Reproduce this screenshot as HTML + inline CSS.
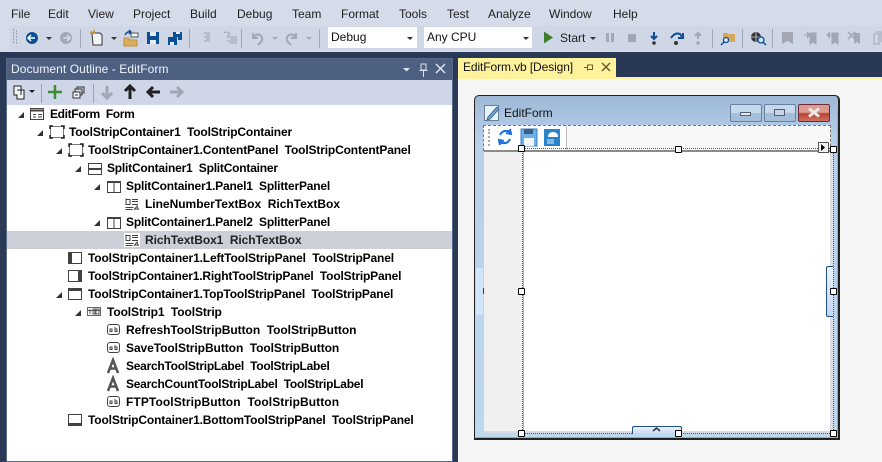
<!DOCTYPE html>
<html><head><meta charset="utf-8"><style>
html,body{margin:0;padding:0}
body{width:882px;height:462px;position:relative;overflow:hidden;background:#293955;font-family:"Liberation Sans",sans-serif;font-size:12px;color:#1e1e1e}
div,span,svg{position:absolute}
.m{top:7px;line-height:14px;white-space:nowrap}
.t{font-weight:bold;color:#000;white-space:nowrap;line-height:18px;height:18px;font-size:12px;letter-spacing:-.15px}
.sep{width:1px;background:#a0a7b8}
.h{width:5px;height:5px;background:#fff;border:1px solid #000;border-radius:1px}
</style></head><body>
<div style="left:0;top:0;width:882px;height:52px;background:#d6dbe9"></div>
<div style="left:10px;top:26px;width:872px;height:24px;background:#cfd6e5"></div>
<div class="m" style="left:11px">File</div><div class="m" style="left:48px">Edit</div><div class="m" style="left:88px">View</div><div class="m" style="left:133px">Project</div><div class="m" style="left:190px">Build</div><div class="m" style="left:237px">Debug</div><div class="m" style="left:292px">Team</div><div class="m" style="left:341px">Format</div><div class="m" style="left:399px">Tools</div><div class="m" style="left:447px">Test</div><div class="m" style="left:488px">Analyze</div><div class="m" style="left:549px">Window</div><div class="m" style="left:613px">Help</div>

<svg style="left:0;top:26px" width="882" height="24" viewBox="0 26 882 24">
<path d="M13 30h1M16 31h1M13 33h1M16 34h1M13 36h1M16 37h1M13 39h1M16 40h1M13 42h1M16 43h1" stroke="#6a7180" fill="none"/>
<circle cx="32" cy="38" r="6" fill="#0b4f96"/><path d="M35 38h-6M31 35l-3 3 3 3" stroke="#fff" stroke-width="1.5" fill="none"/>
<path d="M46 37h6l-3 3z" fill="#333"/>
<circle cx="66" cy="38" r="6" fill="#a2a7b2"/><path d="M63 38h6M67 35l3 3-3 3" stroke="#dde" stroke-width="1.5" fill="none"/>
<path d="M92 33h8l2 2v10h-9z" fill="#f3f4f8" stroke="#333"/><path d="M91 31l1 3M94 30v3M90 33h5" stroke="#c58a2a" stroke-width="1.5"/>
<path d="M111 37h6l-3 3z" fill="#333"/>
<path d="M124 38h4l2 2h7v6h-13z" fill="#dcae62" stroke="#c08f3c"/><path d="M125 35q2-4 6-3M129 30l2 2-2 2" stroke="#0b4f96" stroke-width="1.5" fill="none"/><rect x="131" y="33" width="7" height="4" fill="#f3f4f8" stroke="#555"/>
<path d="M147 32h12v12h-12z" fill="#0b4f96"/><rect x="150" y="32" width="6" height="4" fill="#e8ebf3"/><rect x="150" y="40" width="6" height="4" fill="#e8ebf3"/>
<path d="M168 37h9v8h-9z" fill="#0b4f96"/><path d="M173 32h9v8h-4v-3h-5z" fill="#0b4f96"/><rect x="170" y="42" width="4" height="3" fill="#e8ebf3"/><rect x="176" y="32" width="4" height="2" fill="#e8ebf3"/>
<path d="M204 33h6M206 35h4M204 37h6M206 39h4M204 41h6" stroke="#a2a7b2"/><path d="M227 37h10M230 39h7M227 41h10M230 43h7" stroke="#a2a7b2"/><path d="M224 33q3-2 5 0t-2 3" stroke="#a2a7b2" fill="none"/>
<path d="M253 33v5h5M253 38q3-5 7-3 4 3 1 7l-3 3" stroke="#a2a7b2" stroke-width="2" fill="none"/><path d="M272 37h6l-3 3z" fill="#a2a7b2"/>
<path d="M296 33v5h-5M296 38q-3-5-7-3-4 3-1 7l3 3" stroke="#a2a7b2" stroke-width="2" fill="none"/><path d="M306 37h6l-3 3z" fill="#a2a7b2"/>
<path d="M544 32l9 6-9 6z" fill="#3f7f2e" transform="translate(0,-.5)"/>
<path d="M590 37h6l-3 3z" fill="#333"/>
<rect x="606" y="33" width="3" height="9" fill="#a2a7b2"/><rect x="611" y="33" width="3" height="9" fill="#a2a7b2"/>
<rect x="628" y="34" width="8" height="8" fill="#a2a7b2"/>
<path d="M654 32v6M651 36l3 3 3-3" stroke="#0b4f96" stroke-width="2" fill="none"/><circle cx="654" cy="43" r="1.8" fill="#333"/>
<path d="M671 38q4-6 9-4l2 3M683 33v5h-5" stroke="#0b4f96" stroke-width="2" fill="none"/><circle cx="676" cy="43" r="2" fill="#333"/>
<path d="M698 39v-6M695 36l3-3 3 3" stroke="#a2a7b2" stroke-width="2" fill="none"/><circle cx="698" cy="43" r="1.8" fill="#a2a7b2"/>
<path d="M723 33h4l1 1h7v8h-12z" fill="#d6a65a"/><circle cx="726" cy="40" r="2.5" fill="#e8ebf3" stroke="#0b4f96" stroke-width="1.3"/><path d="M724 42l-3 3" stroke="#0b4f96" stroke-width="1.5"/>
<circle cx="756" cy="37" r="5" fill="#333"/><path d="M751 37h10M756 32v10" stroke="#cfd6e5" stroke-width=".8"/><circle cx="761" cy="40" r="3" fill="#d7dfef" stroke="#0b4f96" stroke-width="1.3"/><path d="M763 42l3 3" stroke="#0b4f96" stroke-width="1.5"/>
<path d="M782 32h11v12l-5.500-3-5.500 3z" fill="#a2a7b2"/>
<path d="M810 33h6v11l-3-2-3 2zM804 35h5M807 32l3 3-3 3" fill="#a2a7b2" stroke="#a2a7b2"/>
<path d="M832 33h6v11l-3-2-3 2zM827 35h5M830 32l-3 3 3 3" fill="#a2a7b2" stroke="#a2a7b2"/>
<path d="M854 33h6v11l-3-2-3 2z" fill="#a2a7b2"/><path d="M848 32l7 7M855 32l-7 7" stroke="#a2a7b2" stroke-width="1.500"/>
<path d="M874 34h5v10h-5z" fill="none" stroke="#a2a7b2"/><path d="M876 32h5v10" fill="none" stroke="#a2a7b2"/>
</svg>
<div class="sep" style="left:80px;top:29px;height:19px"></div><div class="sep" style="left:189px;top:29px;height:19px"></div><div class="sep" style="left:241px;top:29px;height:19px"></div><div class="sep" style="left:319px;top:29px;height:19px"></div><div class="sep" style="left:712px;top:29px;height:19px"></div><div class="sep" style="left:742px;top:29px;height:19px"></div><div class="sep" style="left:772px;top:29px;height:19px"></div>
<div style="left:328px;top:27px;width:89px;height:21px;background:#fff"></div>
<div style="left:331px;top:30px;line-height:15px;color:#111">Debug</div>
<div style="left:424px;top:27px;width:108px;height:21px;background:#fff"></div>
<div style="left:427px;top:30px;line-height:15px;color:#111;white-space:nowrap">Any CPU</div>
<svg style="left:405px;top:36px" width="130" height="6"><path d="M2 1h6l-3 3z" fill="#333"/><path d="M118 1h6l-3 3z" fill="#333"/></svg>
<div class="m" style="left:560px;top:31px;color:#1e1e1e">Start</div>

<div style="left:6px;top:58px;width:447px;height:404px;background:#fff;outline:1px solid #59698a;outline-offset:-1px"></div>
<div style="left:7px;top:59px;width:445px;height:21px;background:#4d6082"></div>
<div style="left:11px;top:62px;color:#f2f4f9;line-height:15px;white-space:nowrap;letter-spacing:.08px">Document Outline - EditForm</div>
<svg style="left:400px;top:60px" width="50" height="20"><path d="M3 8h7l-3.500 3.500z" fill="#dfe4ee"/><path d="M21 4h5v6h-5zM19.500 10.500h8M23.500 11v6" stroke="#dfe4ee" fill="none"/><path d="M36 4l9 9M45 4l-9 9" stroke="#dfe4ee" stroke-width="1.500"/></svg>
<div style="left:7px;top:80px;width:445px;height:25px;background:#cfd6e7"></div>
<svg style="left:7px;top:80px" width="190" height="25" viewBox="7 80 190 25">
<path d="M14 86h7v4h3v9h-7v-4h-3z" fill="#f4f5f9" stroke="#222"/><path d="M17 90h4v5" fill="none" stroke="#222"/><path d="M29 90h6l-3 3z" fill="#222"/>
<rect x="41" y="84" width="1" height="19" fill="#9aa2b4"/>
<path d="M55 85v14M48 92h14" stroke="#3f8a34" stroke-width="2.500"/>
<rect x="73" y="92" width="7" height="6" fill="#f4f5f9" stroke="#333"/><path d="M75 92v-3h7v6h-2M77 89v-2h7v6h-2" fill="none" stroke="#333"/><path d="M75 95h3" stroke="#333"/>
<rect x="93" y="84" width="1" height="19" fill="#9aa2b4"/>
<path d="M107 86v12M102 93l5 5 5-5" stroke="#a0a6b4" stroke-width="3" fill="none"/>
<path d="M130 99v-13M125 91l5-5 5 5" stroke="#222" stroke-width="3" fill="none"/>
<path d="M160 92h-12M153 87l-5 5 5 5" stroke="#222" stroke-width="3" fill="none"/>
<path d="M170 92h12M177 87l5 5-5 5" stroke="#a0a6b4" stroke-width="3" fill="none"/>
</svg>

<div style="left:7px;top:231px;width:445px;height:18px;background:#ccced8"></div>

<svg style="left:0;top:105px" width="150" height="330" viewBox="0 105 150 330" fill="none" stroke="#424242">
<g fill="#333" stroke="none"><path d="M24 112v6h-6zM43 130v6h-6zM62 148v6h-6zM81 166v6h-6zM100 184v6h-6zM100 220v6h-6zM62 292v6h-6zM81 310v6h-6z"/></g>
<rect x="30.500" y="108.500" width="13" height="11"/><path d="M31 110.500h12" stroke-width="2"/><path d="M33 114.500h3M33 117h3M38 114.500h4M38 117h4"/>
<rect x="50.500" y="126.500" width="13" height="11" stroke="#777"/><path d="M50 129v-3h3M61 126h3v3M64 135v3h-3M53 138h-3v-3" stroke="#222" stroke-width="1.500"/>
<rect x="69.500" y="144.500" width="13" height="11" stroke="#777"/><path d="M69 147v-3h3M80 144h3v3M83 153v3h-3M72 156h-3v-3" stroke="#222" stroke-width="1.500"/>
<rect x="88.500" y="163.500" width="13" height="11"/><path d="M88 168.500h14M88 169.500h14"/>
<rect x="107.500" y="181.500" width="13" height="11"/><path d="M114 182v10"/><path d="M108 182.500h12"/>
<rect x="107.500" y="217.500" width="13" height="11"/><path d="M114 218v10"/><path d="M108 218.500h12"/>
<path d="M126 199.500h4v5h-4zM126 198.500v6M132 199.500h6M132 201.500h6M132 204.500h6M125.500 207.500h8M125.500 209.500h7M134 210l3-4 1.500 4M135 209h3"/>
<rect x="124" y="233" width="16" height="14" fill="#fff" stroke="none"/>
<path d="M126 235.500h4v5h-4zM126 234.500v6M132 235.500h6M132 237.500h6M132 240.500h6M125.500 243.500h8M125.500 245.500h7M134 246l3-4 1.500 4M135 245h3"/>
<rect x="68.500" y="252.500" width="13" height="11"/><rect x="68" y="252" width="4" height="12" fill="#424242" stroke="none"/>
<rect x="68.500" y="270.500" width="13" height="11"/><rect x="78" y="270" width="4" height="12" fill="#424242" stroke="none"/>
<rect x="68.500" y="288.500" width="13" height="11"/><rect x="68" y="288" width="14" height="3" fill="#424242" stroke="none"/>
<rect x="87.500" y="307.500" width="13" height="8" stroke="#666"/><path d="M88 310.500h12M90 309v5M93 309h2v5h-2zM96 309h3v5h-3z" stroke="#555"/>
<g><rect x="107.500" y="324.500" width="12" height="10" rx="2.500"/><path d="M110 331.500v-2.500h2v2.500zM115 327v4.500h2v-2.500h-2" stroke-width="1"/></g>
<g><rect x="107.500" y="342.500" width="12" height="10" rx="2.500"/><path d="M110 349.500v-2.500h2v2.500zM115 345v4.500h2v-2.500h-2" stroke-width="1"/></g>
<path d="M108 373l5-13 5 13M110 368.500h6" stroke-width="2.500" stroke="#555"/>
<path d="M108 391l5-13 5 13M110 386.500h6" stroke-width="2.500" stroke="#555"/>
<g><rect x="107.500" y="396.500" width="12" height="10" rx="2.500"/><path d="M110 403.500v-2.500h2v2.500zM115 399v4.500h2v-2.500h-2" stroke-width="1"/></g>
<rect x="68.500" y="414.500" width="13" height="11"/><rect x="68" y="423" width="14" height="3" fill="#424242" stroke="none"/>
</svg>

<div class="t" style="left:50px;top:105px;letter-spacing:-.35px">EditForm&nbsp; Form</div>
<div class="t" style="left:69px;top:123px">ToolStripContainer1&nbsp; ToolStripContainer</div>
<div class="t" style="left:88px;top:141px">ToolStripContainer1.ContentPanel&nbsp; ToolStripContentPanel</div>
<div class="t" style="left:107px;top:159px;letter-spacing:-.21px">SplitContainer1&nbsp; SplitContainer</div>
<div class="t" style="left:126px;top:177px;letter-spacing:-.18px">SplitContainer1.Panel1&nbsp; SplitterPanel</div>
<div class="t" style="left:145px;top:195px;letter-spacing:-.02px">LineNumberTextBox&nbsp; RichTextBox</div>
<div class="t" style="left:126px;top:213px;letter-spacing:-.18px">SplitContainer1.Panel2&nbsp; SplitterPanel</div>
<div class="t" style="left:145px;top:231px;color:#222;letter-spacing:-.07px">RichTextBox1&nbsp; RichTextBox</div>
<div class="t" style="left:88px;top:249px">ToolStripContainer1.LeftToolStripPanel&nbsp; ToolStripPanel</div>
<div class="t" style="left:88px;top:267px;letter-spacing:-.17px">ToolStripContainer1.RightToolStripPanel&nbsp; ToolStripPanel</div>
<div class="t" style="left:88px;top:285px">ToolStripContainer1.TopToolStripPanel&nbsp; ToolStripPanel</div>
<div class="t" style="left:107px;top:303px;letter-spacing:-.1px">ToolStrip1&nbsp; ToolStrip</div>
<div class="t" style="left:126px;top:321px;letter-spacing:-.045px">RefreshToolStripButton&nbsp; ToolStripButton</div>
<div class="t" style="left:126px;top:339px;letter-spacing:-.065px">SaveToolStripButton&nbsp; ToolStripButton</div>
<div class="t" style="left:126px;top:357px;letter-spacing:-.26px">SearchToolStripLabel&nbsp; ToolStripLabel</div>
<div class="t" style="left:126px;top:375px;letter-spacing:-.25px">SearchCountToolStripLabel&nbsp; ToolStripLabel</div>
<div class="t" style="left:126px;top:393px;letter-spacing:.085px">FTPToolStripButton&nbsp; ToolStripButton</div>
<div class="t" style="left:88px;top:411px">ToolStripContainer1.BottomToolStripPanel&nbsp; ToolStripPanel</div>

<div style="left:458px;top:58px;width:158px;height:19px;background:#fff29d"></div>
<div style="left:458px;top:77px;width:424px;height:2px;background:#fff29d"></div>
<div style="left:458px;top:79px;width:424px;height:383px;background:#f5f5f5"></div>
<div style="left:463px;top:60px;color:#111;line-height:15px;white-space:nowrap;letter-spacing:-.1px">EditForm.vb [Design]</div>
<svg style="left:582px;top:60px" width="32" height="16"><path d="M2 7.500h3M5.500 4.500v6M5.500 5h5v4.500h-5" stroke="#6d5f2a" fill="none"/><path d="M20 3l8 8M28 3l-8 8" stroke="#6d5f2a" stroke-width="1.500"/></svg>

<div style="left:474px;top:95px;width:363px;height:342px;border:1px solid #222;border-width:1px 2px 2px 1px;border-radius:5px 5px 0 0;background:linear-gradient(#9db8d6,#b7d0ec 45px,#bdd9f0);"></div>
<div style="left:837px;top:110px;width:1px;height:326px;background:#3fcff0"></div>
<div style="left:476px;top:437px;width:362px;height:1px;background:#3fcff0"></div>
<svg style="left:484px;top:104px" width="18" height="18"><rect x=".5" y="1.500" width="14" height="15" fill="#e8f0f8" stroke="#6a7f96"/><path d="M4 13l9-10 2 2-9 10-3 1z" fill="#6aa6d6" stroke="#2f5f88" stroke-width=".8"/></svg>
<div style="left:504px;top:106px;line-height:15px;color:#111">EditForm</div>
<div style="left:730px;top:104px;width:32px;height:18px;box-sizing:border-box;border:1px solid #6a7f9c;border-radius:2px;background:linear-gradient(#c7d9ec 50%,#a5bfdb 50%)"></div>
<div style="left:740px;top:112px;width:11px;height:4px;background:#e3e8ef;border:1px solid #4f5f75;box-sizing:border-box"></div>
<div style="left:764px;top:104px;width:32px;height:18px;box-sizing:border-box;border:1px solid #6a7f9c;border-radius:2px;background:linear-gradient(#c7d9ec 50%,#a5bfdb 50%)"></div>
<div style="left:774px;top:109px;width:11px;height:7px;border:1px solid #4f5f75;box-sizing:border-box;background:#c7d4e3"></div>
<div style="left:798px;top:104px;width:32px;height:18px;box-sizing:border-box;border:1px solid #6b2a35;border-radius:2px;background:linear-gradient(#dd9a90 45%,#b8412f 55%,#cf7466)"></div>
<svg style="left:807px;top:107px" width="14" height="11"><path d="M2 1.500l10 8M12 1.500l-10 8" stroke="#e9e9ea" stroke-width="3"/></svg>

<div style="left:483px;top:125px;width:348px;height:26px;background:#f8f8f8;box-sizing:border-box;border:1px dashed #777;border-bottom:none"></div>
<div style="left:484px;top:126px;width:82px;height:24px;background:#fff;border-right:1px solid #bbb"></div>
<div style="left:488px;top:129px;width:1px;height:17px;border-left:2px dotted #aaa"></div>
<svg style="left:496px;top:127px" width="70" height="22">
<path d="M4 8q2-5 8-4l2 1M14 2l1 5-5-1" stroke="#1a6fd8" stroke-width="2" fill="none"/><path d="M14 12q-2 5-8 4l-2-1M4 18l-1-5 5 1" stroke="#1a6fd8" stroke-width="2" fill="none"/>
<rect x="25" y="2" width="16" height="17" fill="#6bb0e8" stroke="#3e7fbf"/><rect x="28" y="2" width="9" height="5" fill="#3a5f82"/><rect x="28" y="11" width="10" height="8" fill="#f2f4f6"/>
<rect x="48" y="2" width="16" height="17" fill="#2a82c8"/><path d="M52 10q0-5 5-5t5 5z" fill="#fff"/><rect x="51" y="12" width="7" height="5" fill="#7db8e6"/>
</svg>
<div style="left:484px;top:151px;width:39px;height:280px;background:#f0f0f0"></div>
<div style="left:523px;top:151px;width:1px;height:280px;background:#b5b5b5"></div>
<div style="left:524px;top:151px;width:306px;height:280px;background:#fff"></div>
<div style="left:830px;top:151px;width:3px;height:282px;background:#dcdfe6"></div>
<div style="left:484px;top:150px;width:347px;height:2px;background:#8a8a8a"></div>
<div style="left:484px;top:431px;width:349px;height:2px;background:#d8dbe2"></div>
<div style="left:522px;top:148px;width:312px;height:286px;box-sizing:border-box;border:1px dotted #556"></div>
<div style="left:476px;top:268px;width:7px;height:47px;background:#d3e5f8"></div>
<div style="left:483px;top:288px;width:1px;height:6px;background:#1d3f6e"></div>
<div style="left:818px;top:142px;width:9px;height:9px;background:#f4f4f4;border:1px solid #555"></div>
<svg style="left:820px;top:144px" width="6" height="8"><path d="M1 0l4 3.500-4 3.500z" fill="#000"/></svg>
<div style="left:632px;top:426px;width:48px;height:7px;border:1px solid #1d4f80;border-bottom:none;border-radius:2px 2px 0 0;background:linear-gradient(#eef3fc,#c5d6f4)"></div>
<svg style="left:652px;top:427px" width="10" height="5"><path d="M1 4l3.500-3 3.500 3" stroke="#334" stroke-width="1.500" fill="none"/></svg>
<div style="left:826px;top:266px;width:6px;height:49px;border:1px solid #1d4f80;border-right:none;border-radius:2px 0 0 2px;background:linear-gradient(#eef3fc,#c5d6f4)"></div>
<div class="h" style="left:518px;top:145px"></div>
<div class="h" style="left:675px;top:146px"></div>
<div class="h" style="left:830px;top:146px"></div>
<div class="h" style="left:518px;top:288px"></div>
<div class="h" style="left:830px;top:288px"></div>
<div class="h" style="left:518px;top:430px"></div>
<div class="h" style="left:675px;top:430px"></div>
<div class="h" style="left:830px;top:430px"></div>
</body></html>
